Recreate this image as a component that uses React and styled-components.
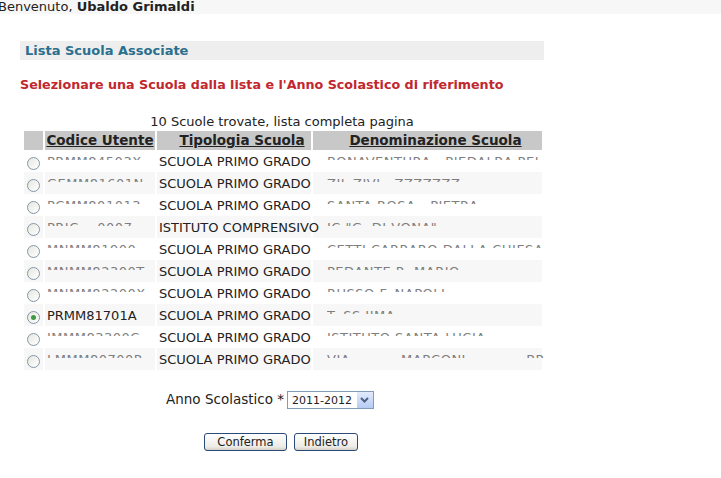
import React, { useState } from 'react';
import styled, { createGlobalStyle } from 'styled-components';

const GlobalStyle = createGlobalStyle`
  body {
    margin: 0;
    background: #fff;
    font-family: "DejaVu Sans", Verdana, sans-serif;
    color: #222;
  }
`;

const scuole = [
  { code: 'PRMM84503X', tipo: 'SCUOLA PRIMO GRADO', nome: 'BONAVENTURA - PIEDALBA PEL' },
  { code: 'GEMM81601N', tipo: 'SCUOLA PRIMO GRADO', nome: 'ZIL ZIVI   ZZZZZZZ' },
  { code: 'PCMM801013', tipo: 'SCUOLA PRIMO GRADO', nome: 'SANTA ROSA - PIETRA' },
  { code: 'PRIC    0007', tipo: 'ISTITUTO COMPRENSIVO', nome: 'IC "G. DI VONA"' },
  { code: 'MNMM81900', tipo: 'SCUOLA PRIMO GRADO', nome: 'CETTI CARRARO DALLA CHIESA' },
  { code: 'MNMM82300T', tipo: 'SCUOLA PRIMO GRADO', nome: 'PEDANTE R. MARIO' },
  { code: 'MNMM82200X', tipo: 'SCUOLA PRIMO GRADO', nome: 'RUSSO F. NAPOLI' },
  { code: 'PRMM81701A', tipo: 'SCUOLA PRIMO GRADO', nome: 'T. SS IIMA' },
  { code: 'IMMM83300C', tipo: 'SCUOLA PRIMO GRADO', nome: 'ISTITUTO SANTA LUCIA' },
  { code: 'LMMM80700R', tipo: 'SCUOLA PRIMO GRADO', nome: 'VIA  .        MARCONI             BR' },
];

const TopBar = styled.div`
  background: #f7f7f7;
  height: 14px;
  font-size: 13px;
  line-height: 13px;
  margin-left: -2px;
  white-space: nowrap;
  b { font-weight: bold; }
`;

const Content = styled.div`
  margin: 27px 0 0 20px;
  width: 524px;
`;

const SectionTitle = styled.div`
  background: #eeeeee;
  height: 19px;
  line-height: 19px;
  padding-left: 5px;
  font-size: 13px;
  font-weight: bold;
  color: #2b6f8f;
`;

const Instruction = styled.div`
  margin-top: 17px;
  font-size: 12.7px;
  font-weight: bold;
  color: #c1272d;
  line-height: 16px;
`;

const Caption = styled.div`
  margin-top: 21px;
  width: 524px;
  text-align: center;
  font-size: 13px;
  line-height: 15px;
`;

const Table = styled.table`
  margin: 2px 0 0 2px;
  width: 522px;
  table-layout: fixed;
  border-collapse: separate;
  border-spacing: 2px 0;
  font-size: 13px;
`;

const Th = styled.th`
  box-sizing: border-box;
  background: #c8c8c8;
  height: 19px;
  padding: 0 0 0 ${p => p.$pad || 0}px;
  font-size: 13.5px;
  line-height: 17px;
  font-weight: bold;
  text-decoration: underline;
  color: #222;
  white-space: nowrap;
  width: ${p => (p.$w ? `${p.$w}px` : 'auto')};
`;

const Td = styled.td`
  box-sizing: border-box;
  background: ${p => (p.$odd ? '#f7f7f7' : '#ffffff')};
  height: 22px;
  padding: 0 0 0 ${p => p.$pad || 2}px;
  white-space: nowrap;
  color: #222;
  overflow: visible;
  vertical-align: middle;
`;

const Radio = styled.span`
  display: block;
  box-sizing: border-box;
  width: 13px;
  height: 13px;
  border: 1px solid #8696a6;
  border-radius: 50%;
  background: linear-gradient(135deg, #e6e6e0, #ffffff);
  margin-top: 4px;
  position: relative;
  &::after {
    content: '';
    display: ${p => (p.$checked ? 'block' : 'none')};
    position: absolute;
    left: 3px;
    top: 3px;
    width: 5px;
    height: 5px;
    border-radius: 50%;
    background: #3f9a3f;
  }
`;

// redacted values: only the top edge of the letters is visible
const Hidden = styled.span`
  display: inline-block;
  height: 5px;
  overflow: hidden;
  vertical-align: 6px;
  line-height: 13px;
  white-space: pre;
  color: #555;
  opacity: 0.75;
  letter-spacing: 0.5px;
`;

const YearRow = styled.div`
  display: flex;
  align-items: center;
  margin: 18px 0 0 146px;
  font-size: 13.5px;
  gap: 3px;
`;

const Select = styled.div`
  display: flex;
  align-items: center;
  border: 1px solid #7f9db9;
  height: 18px;
  width: 87px;
  font-size: 11px;
  padding-left: 4px;
  box-sizing: border-box;
  justify-content: space-between;
  margin-top: 3px;
`;

const Arrow = styled.span`
  width: 16px;
  height: 16px;
  background: linear-gradient(#e3ebfc, #b6cbf4);
  display: flex;
  align-items: center;
  justify-content: center;
`;

const Buttons = styled.div`
  display: flex;
  gap: 7px;
  margin: 24px 0 0 184px;
`;

const Button = styled.button`
  font-family: "DejaVu Sans", Verdana, sans-serif;
  font-size: 11.5px;
  height: 18px;
  padding: 0;
  border: 1px solid #2b4a7a;
  border-radius: 3px;
  background: linear-gradient(#ffffff, #ecebe6 80%, #d6d0c5);
  color: #222;
  width: ${p => p.$w}px;
`;

export default function App() {
  const [sel] = useState(7);
  return (
    <>
      <GlobalStyle />
      <TopBar>Benvenuto, <b>Ubaldo Grimaldi</b></TopBar>
      <Content>
        <SectionTitle>Lista Scuola Associate</SectionTitle>
        <Instruction>Selezionare una Scuola dalla lista e l'Anno Scolastico di riferimento</Instruction>
        <Caption>10 Scuole trovate, lista completa pagina</Caption>
        <Table>
          <thead>
            <tr>
              <Th $w={19}></Th>
              <Th $w={110}>Codice Utente</Th>
              <Th $w={154} $pad={16}>Tipologia Scuola</Th>
              <Th $pad={16}>Denominazione Scuola</Th>
            </tr>
          </thead>
          <tbody>
            {scuole.map((s, i) => (
              <tr key={i}>
                <Td $odd={i % 2 === 1} $pad={3}><Radio $checked={i === sel} /></Td>
                <Td $odd={i % 2 === 1}>
                  {i === sel ? s.code : <Hidden>{s.code}</Hidden>}
                </Td>
                <Td $odd={i % 2 === 1}>{s.tipo}</Td>
                <Td $odd={i % 2 === 1} $pad={14}><Hidden>{s.nome}</Hidden></Td>
              </tr>
            ))}
          </tbody>
        </Table>
        <YearRow>
          <span>Anno Scolastico *</span>
          <Select>
            2011-2012
            <Arrow>
              <svg width="9" height="6" viewBox="0 0 9 6">
                <path d="M1 1 L4.5 4.5 L8 1" stroke="#4d6185" strokeWidth="2" fill="none" />
              </svg>
            </Arrow>
          </Select>
        </YearRow>
        <Buttons>
          <Button $w={83}>Conferma</Button>
          <Button $w={64}>Indietro</Button>
        </Buttons>
      </Content>
    </>
  );
}
